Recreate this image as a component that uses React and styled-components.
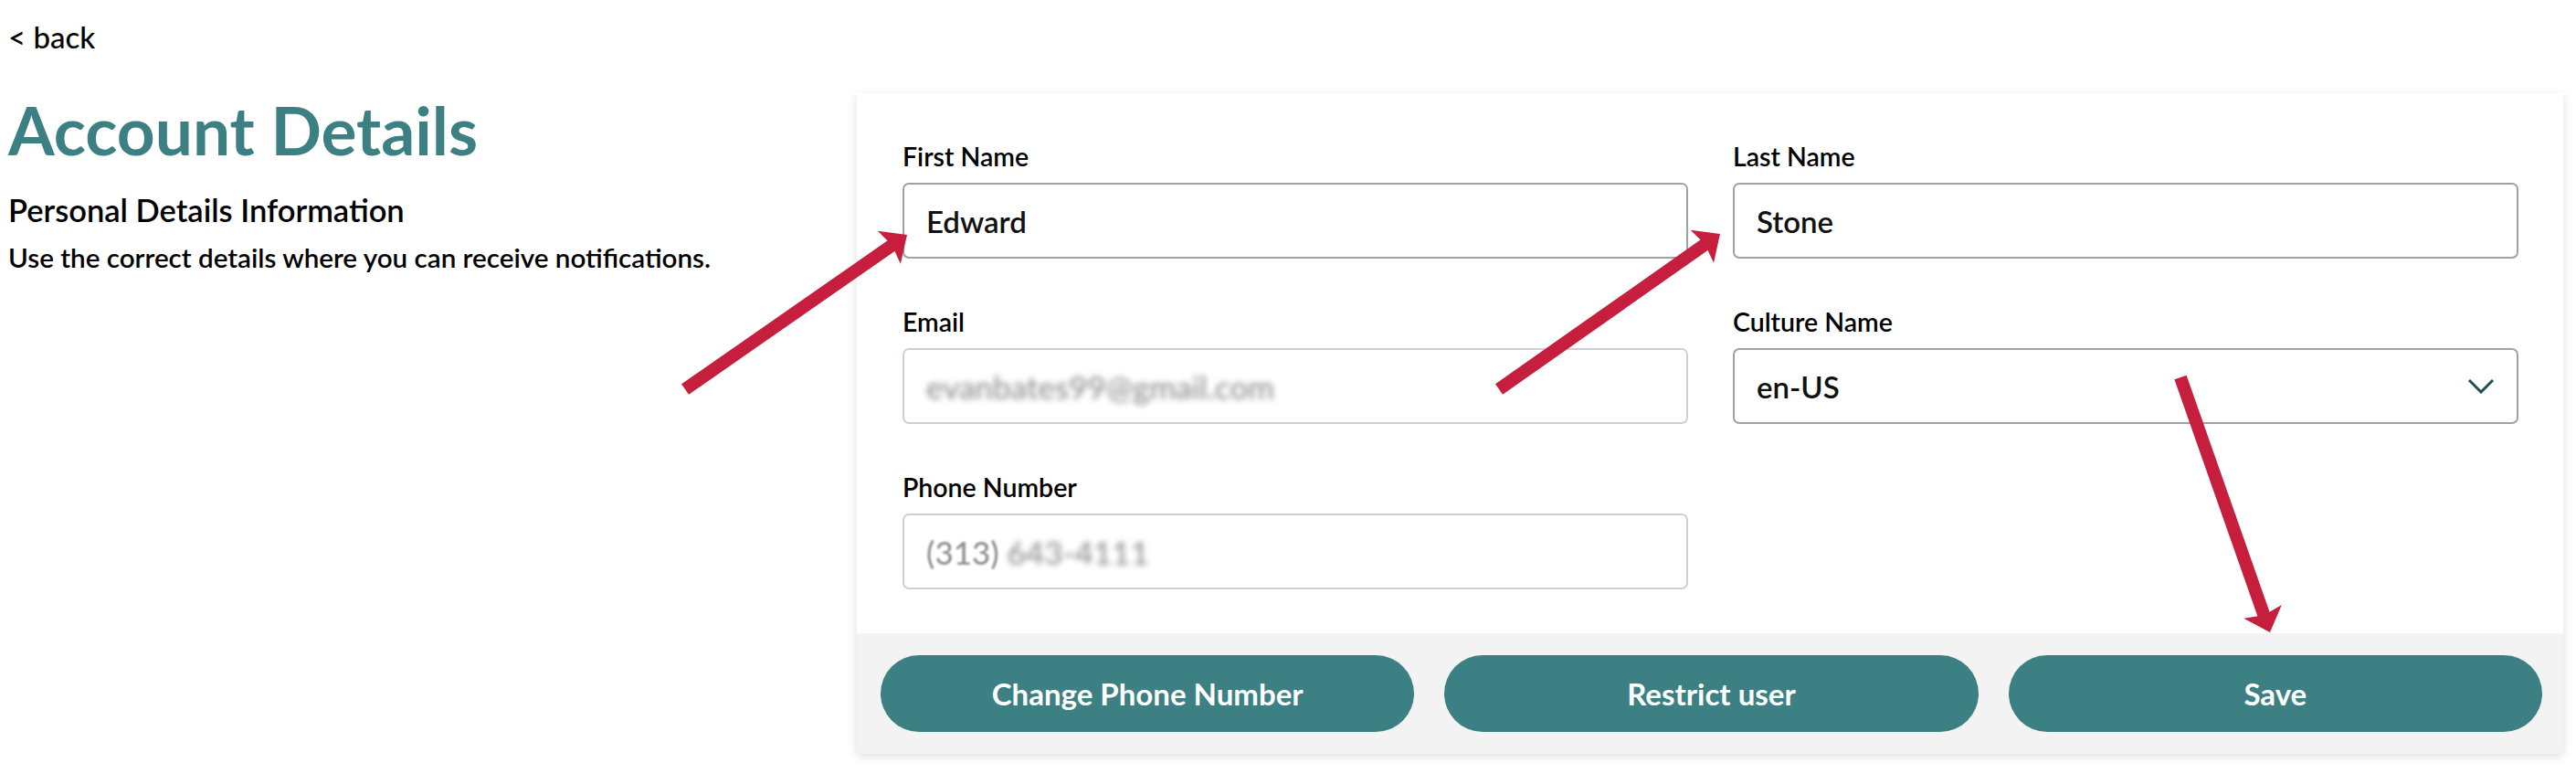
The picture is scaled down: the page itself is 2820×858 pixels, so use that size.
import styled, { createGlobalStyle } from 'styled-components'

const TEAL = '#3d8084'
const ARROW = '#c51f3d'

const GlobalStyle = createGlobalStyle`
  html, body {
    margin: 0;
    padding: 0;
    background: #ffffff;
  }
  body {
    font-family: Lato, "Open Sans", "Liberation Sans", sans-serif;
    color: #111;
  }
  * { box-sizing: border-box; }
`

const fields = [
  { label: 'First Name', value: 'Edward' },
  { label: 'Last Name', value: 'Stone' },
  { label: 'Email', value: 'evanbates99@gmail.com', disabled: true },
  { label: 'Culture Name', value: 'en-US', select: true },
  { label: 'Phone Number', value: '643-4111', prefix: '(313)', disabled: true },
]

const arrows = [
  { from: [750, 426], to: [993, 257] },
  { from: [1641, 426], to: [1883, 256] },
  { from: [2387, 413], to: [2485, 692] },
]

const Arrow = ({ from, to }) => {
  const [x1, y1] = from
  const [x2, y2] = to
  const len = Math.hypot(x2 - x1, y2 - y1)
  const ux = (x2 - x1) / len
  const uy = (y2 - y1) / len
  const nx = -uy
  const ny = ux
  const head = 24
  const half = 22
  const bx = x2 - ux * head
  const by = y2 - uy * head
  const pts = [
    [x2, y2],
    [bx + nx * half, by + ny * half],
    [bx + ux * 4, by + uy * 4],
    [bx - nx * half, by - ny * half],
  ]
  return (
    <g>
      <line x1={x1} y1={y1} x2={bx + ux * 6} y2={by + uy * 6} stroke={ARROW} strokeWidth="14" />
      <polygon points={pts.map((p) => p.join(',')).join(' ')} fill={ARROW} />
    </g>
  )
}

const App = () => {
  return (
    <Page>
      <GlobalStyle />
      <BackLink href="#">&lt; back</BackLink>
      <Content>
        <Intro>
          <Title>Account Details</Title>
          <Subtitle>Personal Details Information</Subtitle>
          <Hint>Use the correct details where you can receive notifications.</Hint>
        </Intro>
        <Card>
          <Fields>
            {fields.map((f) => (
              <Field key={f.label}>
                <Label>{f.label}</Label>
                <InputBox $disabled={f.disabled}>
                  {f.disabled ? (
                    <Muted>
                      {f.prefix && <Soft>{f.prefix}</Soft>}
                      <Blurred>{f.prefix ? ' ' + f.value : f.value}</Blurred>
                    </Muted>
                  ) : (
                    <Value>{f.value}</Value>
                  )}
                  {f.select && (
                    <Chevron viewBox="0 0 30 17" width="30" height="17">
                      <path d="M2 2 L15 15 L28 2" fill="none" stroke="#1f4f50" strokeWidth="3" />
                    </Chevron>
                  )}
                </InputBox>
              </Field>
            ))}
          </Fields>
          <Footer>
            <ActionButton>Change Phone Number</ActionButton>
            <ActionButton>Restrict user</ActionButton>
            <ActionButton>Save</ActionButton>
          </Footer>
        </Card>
      </Content>
      <Annotations width="2820" height="858" viewBox="0 0 2820 858">
        {arrows.map((a, i) => (
          <Arrow key={i} {...a} />
        ))}
      </Annotations>
    </Page>
  )
}

export default App

const Page = styled.div`
  position: relative;
  width: 2820px;
  height: 858px;
  padding: 0 14px 0 9px;
  overflow: hidden;
`

const BackLink = styled.a`
  display: block;
  padding-top: 20px;
  height: 102px;
  font-size: 33px;
  line-height: 40px;
  font-weight: 500;
  color: #000;
  text-decoration: none;
`

const Content = styled.div`
  display: flex;
  align-items: flex-start;
`

const Intro = styled.div`
  width: 929px;
  flex: none;
  padding-top: 1px;
`

const Title = styled.h1`
  margin: 0 0 31px;
  font-size: 73px;
  line-height: 78px;
  font-weight: 700;
  color: ${TEAL};
`

const Subtitle = styled.h2`
  margin: 0 0 16px;
  font-size: 34.5px;
  line-height: 36px;
  font-weight: 600;
  color: #000;
`

const Hint = styled.p`
  margin: 0;
  font-size: 29.6px;
  line-height: 36px;
  font-weight: 600;
  color: #000;
`

const Card = styled.section`
  flex: 1;
  background: #fff;
  box-shadow: 0 3px 10px rgba(0, 0, 0, 0.13);
`

const Fields = styled.div`
  display: grid;
  grid-template-columns: 1fr 1fr;
  column-gap: 49px;
  row-gap: 52px;
  padding: 52px 49px 48px 50px;
`

const Field = styled.div`
  display: flex;
  flex-direction: column;
`

const Label = styled.label`
  font-size: 28.5px;
  line-height: 34px;
  font-weight: 600;
  color: #000;
  margin-bottom: 12px;
`

const InputBox = styled.div`
  position: relative;
  display: flex;
  align-items: center;
  height: 83px;
  padding: 0 24px;
  border: 2px solid ${(p) => (p.$disabled ? '#cdd1d6' : '#9ca2aa')};
  border-radius: 7px;
  background: #fff;
`

const Value = styled.span`
  font-size: 33px;
  font-weight: 600;
  color: #111;
`

const Muted = styled.span`
  font-size: 35px;
  font-weight: 500;
  color: #8f8f8f;
  white-space: pre;
`

const Soft = styled.span`
  filter: blur(0.8px);
`

const Blurred = styled.span`
  display: inline-block;
  filter: blur(3px);
`

const Chevron = styled.svg`
  margin-left: auto;
  margin-right: 0;
`

const Footer = styled.div`
  display: grid;
  grid-template-columns: repeat(3, 1fr);
  column-gap: 33px;
  padding: 24px 23px 24px 26px;
  background: #f3f3f3;
`

const ActionButton = styled.button`
  height: 84px;
  border: none;
  border-radius: 42px;
  background: ${TEAL};
  color: #fff;
  font-family: inherit;
  font-size: 33px;
  font-weight: 700;
  cursor: pointer;
`

const Annotations = styled.svg`
  position: absolute;
  left: 0;
  top: 0;
  pointer-events: none;
`
